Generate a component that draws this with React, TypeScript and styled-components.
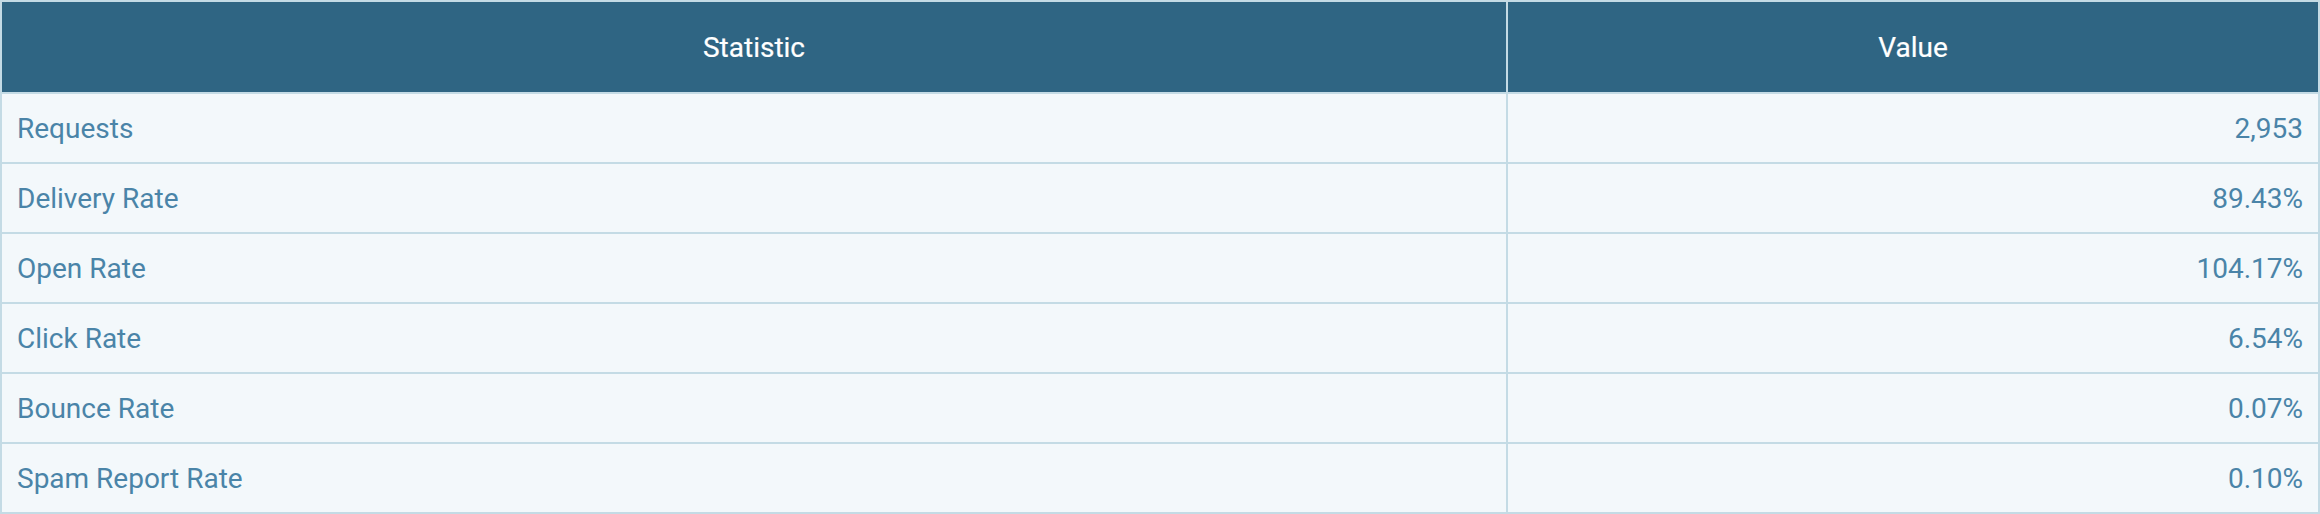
import React from "react";
import styled, { createGlobalStyle } from "styled-components";

const GlobalStyle = createGlobalStyle`
  html, body { margin: 0; padding: 0; background: #ffffff; }
  body { font-family: Roboto, "Liberation Sans", Arial, sans-serif; }
`;

const Table = styled.div`
  display: grid;
  grid-template-columns: 1504px 810px;
  grid-template-rows: 90px;
  grid-auto-rows: 68px;
  gap: 2px;
  padding: 2px;
  width: 2320px;
  box-sizing: border-box;
  background: #c4dbe5;
`;

const HeadCell = styled.div`
  background: #2f6583;
  color: #ffffff;
  font-size: 28px;
  font-weight: 400;
  display: flex;
  align-items: center;
  justify-content: center;
  -webkit-text-stroke: 0.2px #ffffff;
`;

const Cell = styled.div<{ $align?: "left" | "right" }>`
  background: #f3f8fb;
  color: #4a84a8;
  font-size: 28px;
  display: flex;
  align-items: center;
  padding: 0 15px;
  justify-content: ${(p) => (p.$align === "right" ? "flex-end" : "flex-start")};
`;

const rows: [string, string][] = [
  ["Requests", "2,953"],
  ["Delivery Rate", "89.43%"],
  ["Open Rate", "104.17%"],
  ["Click Rate", "6.54%"],
  ["Bounce Rate", "0.07%"],
  ["Spam Report Rate", "0.10%"],
];

export default function App() {
  return (
    <>
      <GlobalStyle />
      <Table>
        <HeadCell>Statistic</HeadCell>
        <HeadCell>Value</HeadCell>
        {rows.map(([k, v]) => (
          <React.Fragment key={k}>
            <Cell>{k}</Cell>
            <Cell $align="right">{v}</Cell>
          </React.Fragment>
        ))}
      </Table>
    </>
  );
}
